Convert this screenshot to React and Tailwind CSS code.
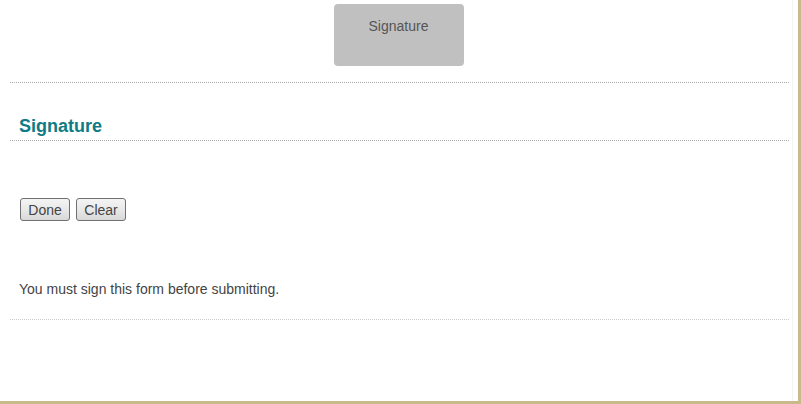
import React from 'react';

const FormButton = ({ children }) => (
    <button
        type="button"
        className="h-[23px] w-[50px] rounded-[3px] border border-[#707070] bg-gradient-to-b from-[#f4f4f4] via-[#e8e8e8] to-[#d8d8d8] text-[14px] leading-[16px] text-[#444]"
    >
        {children}
    </button>
);

const App = () => {
    return (
        <div className="box-border h-[404px] w-[801px] border-b-[3px] border-r-[3px] border-[#c9ba8b] bg-white font-['Liberation_Sans',Arial,sans-serif]">
            <div className="h-full w-[793px] border-r border-[#f4f4f4]">
                <div className="flex justify-center pl-[5px] pt-[4px]">
                    <div className="h-[62px] w-[130px] rounded-[4px] bg-[#c0c0c0] pt-[14px] text-center text-[14px] leading-[16px] text-[#555]">
                        Signature
                    </div>
                </div>

                <div className="ml-[10px] w-[779px]">
                    <div className="mt-[16px] border-t border-dotted border-[#aaa]" />

                    <h2 className="mt-[33px] border-b border-dotted border-[#aaa] pb-[3px] pl-[9px] text-[18px] font-bold leading-[21px] text-[#0f7b85]">
                        Signature
                    </h2>

                    <div className="ml-[10px] mt-[57px] flex gap-[6px]">
                        <FormButton>Done</FormButton>
                        <FormButton>Clear</FormButton>
                    </div>

                    <p className="ml-[9px] mt-[60px] text-[14px] leading-[16px] text-[#444]">
                        You must sign this form before submitting.
                    </p>

                    <div className="mt-[22px] border-t border-dotted border-[#ccc]" />
                </div>
            </div>
        </div>
    );
};

export default App;
